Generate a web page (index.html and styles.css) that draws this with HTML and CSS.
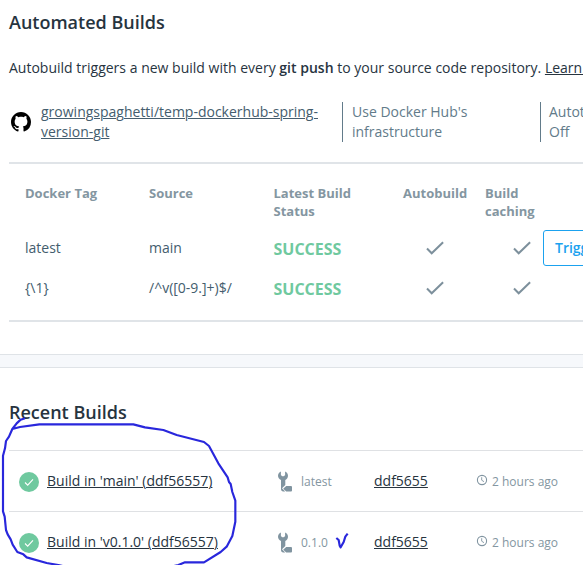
FILE: index.html
```html
<!DOCTYPE html>
<html lang="en">
<head>
<meta charset="utf-8">
<title>Automated Builds</title>
<link rel="stylesheet" href="styles.css">
</head>
<body>
<svg class="defs" aria-hidden="true">
  <symbol id="check" viewBox="0 0 18 14"><path d="M1 7.500 5.700 12.300 17.100 1.200" fill="none" stroke="currentColor" stroke-width="2"/></symbol>
  <symbol id="done" viewBox="0 0 20 20"><circle cx="10" cy="10" r="10" fill="#6fc99f"/><path d="M6 10.5 8.7 13.2 14 7.4" fill="none" stroke="#fff" stroke-width="1.1"/></symbol>
  <symbol id="wrench" viewBox="0 0 15 21"><path fill="currentColor" d="M2.900 .5V4.200L5 5.500 7.100 4.200V.5C9 1.300 10 2.900 10 4.800 10 6.600 9 8.200 7.300 9V14L4 17.300 7.200 20.500H5.300C3.800 20.500 3 19.500 3 18V9C1.200 8.200 0 6.600 0 4.800 0 2.900 1.100 1.300 2.900 .5Z"/><path fill="currentColor" d="M8.200 15H13Q14 15 14 16V19.500Q14 20.500 13 20.500H8.200L5.200 17.700Z"/></symbol>
  <symbol id="clock" viewBox="0 0 12 12"><circle cx="6" cy="6" r="4.600" fill="none" stroke="currentColor" stroke-width="1.100"/><path d="M5.700 3.200V6.200L8 7.700" fill="none" stroke="currentColor" stroke-width=".9"/></symbol>
</svg>
<main class="page">
  <section class="card automated">
    <h2>Automated Builds</h2>
    <p class="intro">Autobuild triggers a new build with every <b>git push</b> to your source code repository. <a href="#">Learn More</a></p>
    <div class="summary">
      <div class="repo">
        <svg class="github" viewBox="0 0 16 16"><path d="M8 0C3.580 0 0 3.580 0 8c0 3.540 2.290 6.530 5.470 7.590.4.070.55-.17.55-.38 0-.19-.01-.82-.01-1.490-2.010.37-2.530-.49-2.690-.94-.09-.23-.48-.94-.82-1.130-.28-.15-.68-.52-.01-.53.63-.01 1.080.58 1.230.82.72 1.210 1.870.87 2.330.66.07-.52.28-.87.51-1.070-1.780-.2-3.640-.89-3.640-3.950 0-.87.31-1.590.82-2.150-.08-.2-.36-1.020.08-2.120 0 0 .67-.21 2.200.82.64-.18 1.320-.27 2-.27s1.360.09 2 .27c1.530-1.040 2.200-.82 2.200-.82.44 1.100.16 1.920.08 2.120.51.56.82 1.270.82 2.150 0 3.070-1.870 3.750-3.650 3.950.29.25.54.73.54 1.480 0 1.070-.01 1.930-.01 2.200 0 .21.15.46.55.38A8.010 8.010 0 0 0 16 8c0-4.420-3.580-8-8-8Z"/></svg>
        <a href="#">growingspaghetti/temp-dockerhub-spring-<br>version-git</a>
      </div>
      <div class="fact infra">Use Docker Hub's<br>infrastructure</div>
      <div class="fact tests">Autotest:<br>Off</div>
    </div>
    <div class="rules">
      <div class="rule head"><span>Docker Tag</span><span>Source</span><span>Latest Build<br>Status</span><span>Autobuild</span><span>Build<br>caching</span></div>
      <div class="rule first"><span>latest</span><span>main</span><strong>SUCCESS</strong><svg class="check auto"><use href="#check"/></svg><svg class="check cache"><use href="#check"/></svg><button>Trigger</button></div>
      <div class="rule"><span>{\1}</span><span>/^v([0-9.]+)$/</span><strong>SUCCESS</strong><svg class="check auto"><use href="#check"/></svg><svg class="check cache"><use href="#check"/></svg></div>
    </div>
  </section>
  <section class="card recent">
    <h2>Recent Builds</h2>
    <div class="build">
      <svg class="done"><use href="#done"/></svg><a href="#">Build in 'main' (ddf56557)</a>
      <svg class="wrench"><use href="#wrench"/></svg><span>latest</span><a href="#">ddf5655</a>
      <svg class="clock"><use href="#clock"/></svg><span>2 hours ago</span>
    </div>
    <div class="build">
      <svg class="done"><use href="#done"/></svg><a href="#">Build in 'v0.1.0' (ddf56557)</a>
      <svg class="wrench"><use href="#wrench"/></svg><span>0.1.0</span><a href="#">ddf5655</a>
      <svg class="clock"><use href="#clock"/></svg><span>2 hours ago</span>
    </div>
  </section>
  <svg class="ink" viewBox="0 0 1050 675">
    <path d="M75 235 62 239 50 250 37 267 60 261 118 253H400L435 262 490 270 530 285 612 306 627 318 655 370 683 412 687 426 692 432 697 456 706 482V545L697 588 680 620 662 636 612 667H555L535 675 510 681M37 267 27 290 18 303 15 325 9 347V514L14 530 18 570 23 583 32 598 38 614 52 636 70 643 80 652 140 669 175 675 200 681"/>
    <path d="M1009 594 1016 600 1019 617 1022 622 1031 606 1036 590 1043 581"/>
  </svg>
</main>
</body>
</html>
```
FILE: styles.css
```css
* { box-sizing: border-box; }
html { overflow: hidden; }
body {
  margin: 0;
  height: 565px;
  overflow: hidden;
  background: #f6f8fb;
  color: #27343f;
  font: 14px/20px "Open Sans", sans-serif;
}
a { color: inherit; text-decoration-thickness: 1px; text-underline-offset: 1px; }
.defs { position: absolute; width: 0; height: 0; }
.page { position: relative; width: 100%; height: 565px; overflow: hidden; }
.card { background: #fff; padding: 0 0 0 9px; }
.automated { height: 355px; padding-top: 10px; border-bottom: 1px solid #dfe3e7; }
.recent { height: 220px; margin-top: 12px; padding-top: 32px; border-top: 1px solid #dfe3e7; }
h2 { margin: 0; font-size: 18px; line-height: 24px; font-weight: 600; }
.intro { margin: 24px 0; white-space: nowrap; word-spacing: .04px; }
.intro b { font-weight: 600; }
.summary { display: flex; height: 62px; border-bottom: 2px solid #e0e4e8; color: #627b8a; }
.repo { display: flex; flex: none; width: 333px; color: #445d6e; }
.github { width: 20px; height: 20px; margin: 10px 10px 0 2px; fill: #000; }
.fact { flex: none; height: 40px; padding-left: 9px; border-left: 1px solid #627b8a; }
.infra { width: 198px; }
.tests { padding-left: 8px; }
.rules { height: 158px; padding: 20px 0 0 16px; border-bottom: 2px solid #e0e4e8; color: #445d6e; }
.rule { display: grid; grid-template-columns: 124px 124.500px 129.500px 82px 58px 100px; height: 40px; align-items: center; }
.head { height: 36px; margin-bottom: 8px; align-items: start; color: #8496a1; font-size: 13px; line-height: 18px; font-weight: 700; }
.rule strong { color: #6fc99f; font-size: 16px; padding-top: 2px; }
.check { width: 18px; height: 14px; color: #7d909c; }
.auto { margin-left: 23px; }
.cache { margin-left: 28px; }
button {
  width: 90px;
  height: 36px;
  padding: 0 11px;
  border: 1px solid #1ba2ef;
  border-radius: 3px;
  background: #fff;
  color: #1ba2ef;
  font: 600 14px/20px "Open Sans", sans-serif;
  text-align: left;
}
.build {
  display: grid;
  grid-template-columns: 28px 231px 23px 73px 102px 16px 100px;
  align-items: center;
  height: 61px;
  padding-left: 10px;
  border-top: 1px solid #dfe1e4;
  white-space: nowrap;
}
.recent h2 { margin-bottom: 26px; }
.build span { color: #8496a1; font-size: 12px; padding-top: 2px; }
.done { width: 20px; height: 20px; margin-top: 2px; }
.wrench { width: 15px; height: 21px; color: #8094a0; }
.clock { width: 12px; height: 12px; margin-top: -2px; color: #8094a0; }
.ink {
  position: absolute;
  left: 0;
  top: 340px;
  width: 350px;
  height: 225px;
  fill: none;
  stroke: #2927dc;
  stroke-width: 6.500;
  stroke-linejoin: round;
  pointer-events: none;
}
```
